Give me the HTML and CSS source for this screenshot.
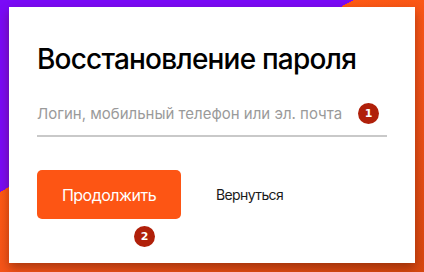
FILE: index.html
```html
<!DOCTYPE html>
<html lang="ru">
<head>
<meta charset="utf-8">
<link rel="stylesheet" href="styles.css">
</head>
<body>
<div class="card">
  <h1 class="title">Восстановление пароля</h1>
  <div class="field">
    <input class="input" type="text" placeholder="Логин, мобильный телефон или эл. почта">
    <span class="badge badge-field">1</span>
  </div>
  <div class="actions">
    <div class="primary-wrap">
      <button class="btn-primary">Продолжить</button>
      <span class="badge badge-btn">2</span>
    </div>
    <button class="btn-link">Вернуться</button>
  </div>
</div>
</body>
</html>
```

FILE: styles.css
```css
* { box-sizing: border-box; }
html, body { margin: 0; height: 100%; }
body {
  width: 424px;
  height: 272px;
  padding: 7px 9px 9px 9px;
  overflow: hidden;
  font-family: Inter, "Noto Sans", sans-serif;
  background: linear-gradient(151.5deg, #7a0af7 0, #7a0af7 168.7px, #ff5a14 168.7px, #f2531a 60%, #d8480f 100%);
}
.card {
  background: #fff;
  height: 256px;
  padding: 35px 28px 0 28px;
  box-shadow: 0 5px 10px rgba(80, 20, 0, 0.45);
}
.title {
  margin: 0;
  font-size: 28px;
  line-height: 34px;
  font-weight: 500;
  color: #000;
  letter-spacing: -0.8px;
}
.field {
  position: relative;
  margin-top: 22px;
  padding-top: 5px;
  border-bottom: 2px solid #c9c9c9;
  height: 39px;
}
.input {
  display: block;
  border: 0;
  outline: 0;
  padding: 0;
  width: 100%;
  height: 20px;
  font-family: inherit;
  font-size: 15px;
  background: transparent;
}
.input::placeholder { color: #9a9a9a; }
.badge {
  position: absolute;
  width: 21px;
  height: 21px;
  border-radius: 50%;
  background: #b0200a;
  color: #fff;
  font-family: "DejaVu Sans", sans-serif;
  font-weight: bold;
  font-size: 11px;
  line-height: 21px;
  text-align: center;
  box-shadow: 0 0 0 1px rgba(255,255,255,0.8);
}
.badge-field { left: 321px; top: 5px; }
.actions {
  display: flex;
  align-items: center;
  margin-top: 33px;
}
.primary-wrap { position: relative; }
.btn-primary {
  display: block;
  width: 144px;
  height: 49px;
  border: 0;
  border-radius: 5px;
  background: #fd5514;
  color: #fff;
  font-family: inherit;
  font-size: 16px;
  letter-spacing: -0.5px;
  padding: 0;
}
.badge-btn { left: 97px; top: 56px; }
.btn-link {
  margin-left: 35px;
  border: 0;
  background: none;
  padding: 0;
  font-family: inherit;
  font-size: 14px;
  letter-spacing: -0.6px;
  color: #1a1a1a;
}
```
